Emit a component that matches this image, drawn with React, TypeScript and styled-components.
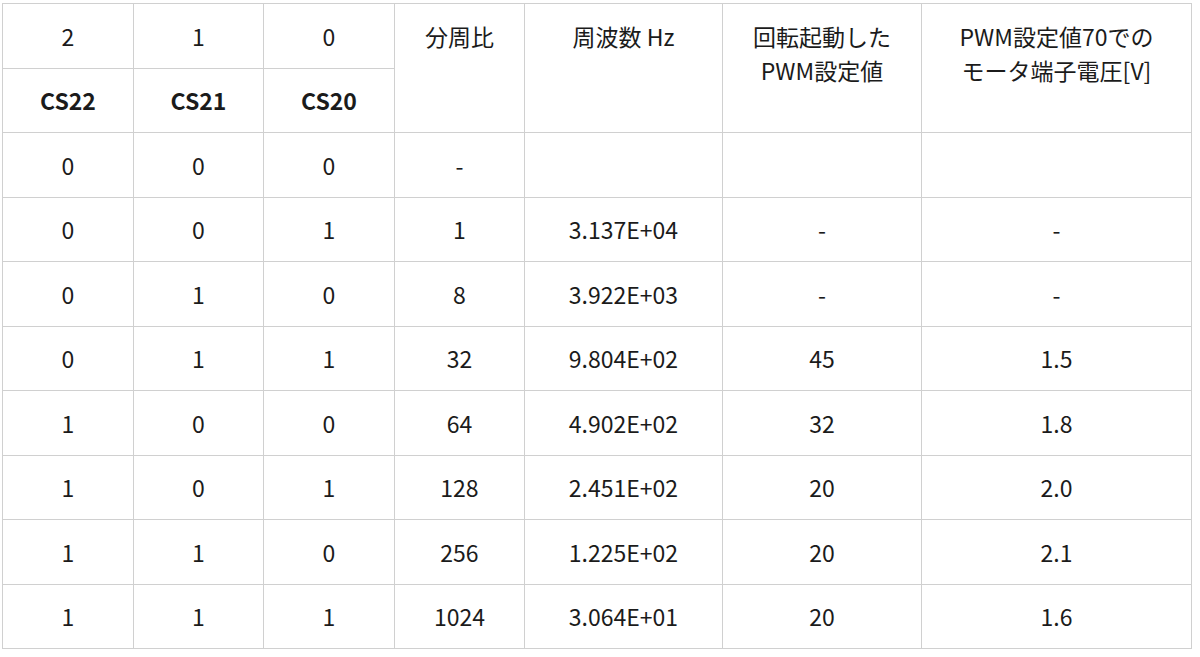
import React from 'react';
import styled, { createGlobalStyle } from 'styled-components';

const GlobalStyle = createGlobalStyle`
  body {
    margin: 0;
    background: #fff;
    font-family: "Noto Sans CJK JP", "Noto Sans", sans-serif;
    color: #1b1b1b;
  }
`;

const widths = [131, 130, 131, 130, 198, 199, 270];

const rows = [
  ['0', '0', '0', '-', '', '', ''],
  ['0', '0', '1', '1', '3.137E+04', '-', '-'],
  ['0', '1', '0', '8', '3.922E+03', '-', '-'],
  ['0', '1', '1', '32', '9.804E+02', '45', '1.5'],
  ['1', '0', '0', '64', '4.902E+02', '32', '1.8'],
  ['1', '0', '1', '128', '2.451E+02', '20', '2.0'],
  ['1', '1', '0', '256', '1.225E+02', '20', '2.1'],
  ['1', '1', '1', '1024', '3.064E+01', '20', '1.6'],
];

function App() {
  return (
    <>
      <GlobalStyle />
      <Page>
        <Table>
          <colgroup>
            {widths.map((w, i) => (
              <col key={i} style={{ width: w }} />
            ))}
          </colgroup>
          <thead>
            <tr>
              <Cell>2</Cell>
              <Cell>1</Cell>
              <Cell>0</Cell>
              <HeadCell rowSpan={2}>分周比</HeadCell>
              <HeadCell rowSpan={2}>周波数 Hz</HeadCell>
              <HeadCell rowSpan={2}>
                回転起動した
                <br />
                PWM設定値
              </HeadCell>
              <HeadCell rowSpan={2}>
                PWM設定値70での
                <br />
                モータ端子電圧[V]
              </HeadCell>
            </tr>
            <tr>
              <Cell $bold>CS22</Cell>
              <Cell $bold>CS21</Cell>
              <Cell $bold>CS20</Cell>
            </tr>
          </thead>
          <tbody>
            {rows.map((r, i) => (
              <tr key={i}>
                {r.map((v, j) => (
                  <Cell key={j}>{v}</Cell>
                ))}
              </tr>
            ))}
          </tbody>
        </Table>
      </Page>
    </>
  );
}

export default App;

const Page = styled.div`
  padding: 3px 2px;
`;

const Table = styled.table`
  border-collapse: collapse;
  table-layout: fixed;
  width: 1189px;
  font-size: 23px;
  line-height: 34.5px;
`;

const Cell = styled.td<{ $bold?: boolean }>`
  border: 1px solid #d0d0d0;
  height: 34.5px;
  padding: 14.5px 10px;
  text-align: center;
  vertical-align: middle;
  font-weight: ${(p) => (p.$bold ? 700 : 400)};
  white-space: nowrap;
`;

const HeadCell = styled.td`
  border: 1px solid #d0d0d0;
  padding: 14.5px 10px;
  text-align: center;
  vertical-align: top;
  white-space: nowrap;
`;
